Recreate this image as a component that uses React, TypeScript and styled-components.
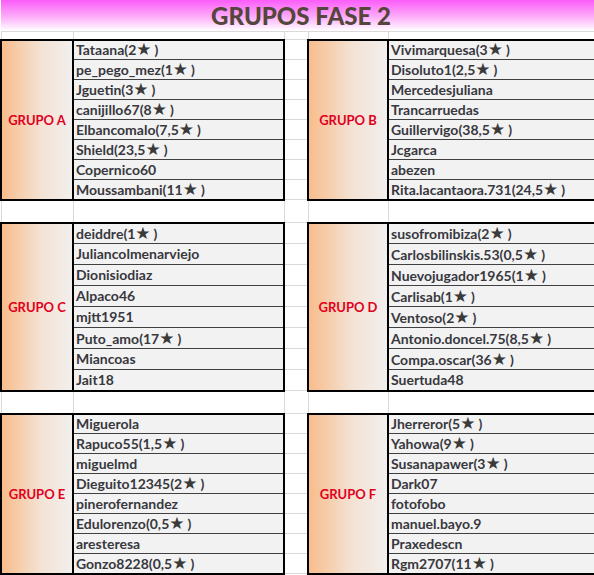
import React from "react";
import styled, { createGlobalStyle } from "styled-components";

type Entry = { name: string; stars?: string };
type Group = { label: string; players: Entry[] };

const GlobalStyle = createGlobalStyle`
  body {
    margin: 0;
    background: #ffffff;
    overflow: hidden;
  }
`;

const p = (name: string, stars?: string): Entry => ({ name, stars });

// pairs of groups shown side by side, with the row height of each band
const bands: { height: number; left: Group; right: Group }[] = [
  {
    height: 20,
    left: {
      label: "GRUPO A",
      players: [
        p("Tataana", "2"),
        p("pe_pego_mez", "1"),
        p("Jguetin", "3"),
        p("canijillo67", "8"),
        p("Elbancomalo", "7,5"),
        p("Shield", "23,5"),
        p("Copernico60"),
        p("Moussambani", "11"),
      ],
    },
    right: {
      label: "GRUPO B",
      players: [
        p("Vivimarquesa", "3"),
        p("Disoluto1", "2,5"),
        p("Mercedesjuliana"),
        p("Trancarruedas"),
        p("Guillervigo", "38,5"),
        p("Jcgarca"),
        p("abezen"),
        p("Rita.lacantaora.731", "24,5"),
      ],
    },
  },
  {
    height: 21,
    left: {
      label: "GRUPO C",
      players: [
        p("deiddre", "1"),
        p("Juliancolmenarviejo"),
        p("Dionisiodiaz"),
        p("Alpaco46"),
        p("mjtt1951"),
        p("Puto_amo", "17"),
        p("Miancoas"),
        p("Jait18"),
      ],
    },
    right: {
      label: "GRUPO D",
      players: [
        p("susofromibiza", "2"),
        p("Carlosbilinskis.53", "0,5"),
        p("Nuevojugador1965", "1"),
        p("Carlisab", "1"),
        p("Ventoso", "2"),
        p("Antonio.doncel.75", "8,5"),
        p("Compa.oscar", "36"),
        p("Suertuda48"),
      ],
    },
  },
  {
    height: 20,
    left: {
      label: "GRUPO E",
      players: [
        p("Miguerola"),
        p("Rapuco55", "1,5"),
        p("miguelmd"),
        p("Dieguito12345", "2"),
        p("pinerofernandez"),
        p("Edulorenzo", "0,5"),
        p("aresteresa"),
        p("Gonzo8228", "0,5"),
      ],
    },
    right: {
      label: "GRUPO F",
      players: [
        p("Jherreror", "5"),
        p("Yahowa", "9"),
        p("Susanapawer", "3"),
        p("Dark07"),
        p("fotofobo"),
        p("manuel.bayo.9"),
        p("Praxedescn"),
        p("Rgm2707", "11"),
      ],
    },
  },
];

const Sheet = styled.table`
  border-collapse: collapse;
  table-layout: fixed;
  width: 600px;
  font-family: Lato, "Liberation Sans", sans-serif;
`;

const Row = styled.tr<{ $h: number }>`
  height: ${(props) => props.$h}px;
`;

const TitleCell = styled.td`
  padding: 0;
  background: linear-gradient(to bottom, #fb5cf9 0%, #fcaef9 55%, #ffffff 100%);
  text-align: center;
  font-size: 24px;
  font-weight: 900;
  color: #54463a;
  line-height: 31px;
`;

const GridCell = styled.td`
  padding: 0;
  border: 1px solid #dadada;
`;

const LabelCell = styled.td`
  padding: 0;
  border: 2px solid #000000;
  background: linear-gradient(to right, #f8bd8c 0%, #f3e2d4 55%, #f2efed 100%);
  color: #e0001e;
  text-align: center;
  font-size: 13px;
  font-weight: 700;
`;

const NameCell = styled.td<{ $first: boolean; $last: boolean }>`
  padding: 0 0 0 2px;
  background: #f2f2f2;
  border-left: 2px solid #000000;
  border-right: 2px solid #000000;
  border-top: ${(props) => (props.$first ? "2px solid #000000" : "1px solid #404040")};
  border-bottom: ${(props) => (props.$last ? "2px solid #000000" : "1px solid #404040")};
  color: #38383e;
  font-size: 14px;
  font-weight: 700;
  white-space: nowrap;
  overflow: hidden;
  line-height: 1;
`;

const Star = styled.span`
  font-family: "DejaVu Sans", sans-serif;
  font-size: 17px;
  line-height: 1;
  color: #3a3a3a;
  margin-right: 3px;
`;

const PlayerName = ({ entry }: { entry: Entry }) => (
  <>
    {entry.name}
    {entry.stars && (
      <>
        ({entry.stars}
        <Star>★</Star>)
      </>
    )}
  </>
);

const SpacerRow = ({ height }: { height: number }) => (
  <Row $h={height}>
    <GridCell />
    <GridCell />
    <GridCell />
    <GridCell />
    <GridCell />
  </Row>
);

export default function App() {
  return (
    <>
      <GlobalStyle />
      <Sheet>
        <colgroup>
          <col style={{ width: 72 }} />
          <col style={{ width: 211 }} />
          <col style={{ width: 24 }} />
          <col style={{ width: 80 }} />
          <col style={{ width: 213 }} />
        </colgroup>
        <tbody>
          <Row $h={31}>
            <TitleCell colSpan={5}>GRUPOS FASE 2</TitleCell>
          </Row>
          <SpacerRow height={8} />
          {bands.map((band, b) => (
            <React.Fragment key={band.left.label}>
              {b > 0 && <SpacerRow height={23} />}
              {band.left.players.map((entry, i) => (
                <Row $h={band.height} key={entry.name}>
                  {i === 0 && <LabelCell rowSpan={8}>{band.left.label}</LabelCell>}
                  <NameCell $first={i === 0} $last={i === 7}>
                    <PlayerName entry={entry} />
                  </NameCell>
                  <GridCell />
                  {i === 0 && <LabelCell rowSpan={8}>{band.right.label}</LabelCell>}
                  <NameCell $first={i === 0} $last={i === 7}>
                    <PlayerName entry={band.right.players[i]} />
                  </NameCell>
                </Row>
              ))}
            </React.Fragment>
          ))}
          <SpacerRow height={20} />
        </tbody>
      </Sheet>
    </>
  );
}
